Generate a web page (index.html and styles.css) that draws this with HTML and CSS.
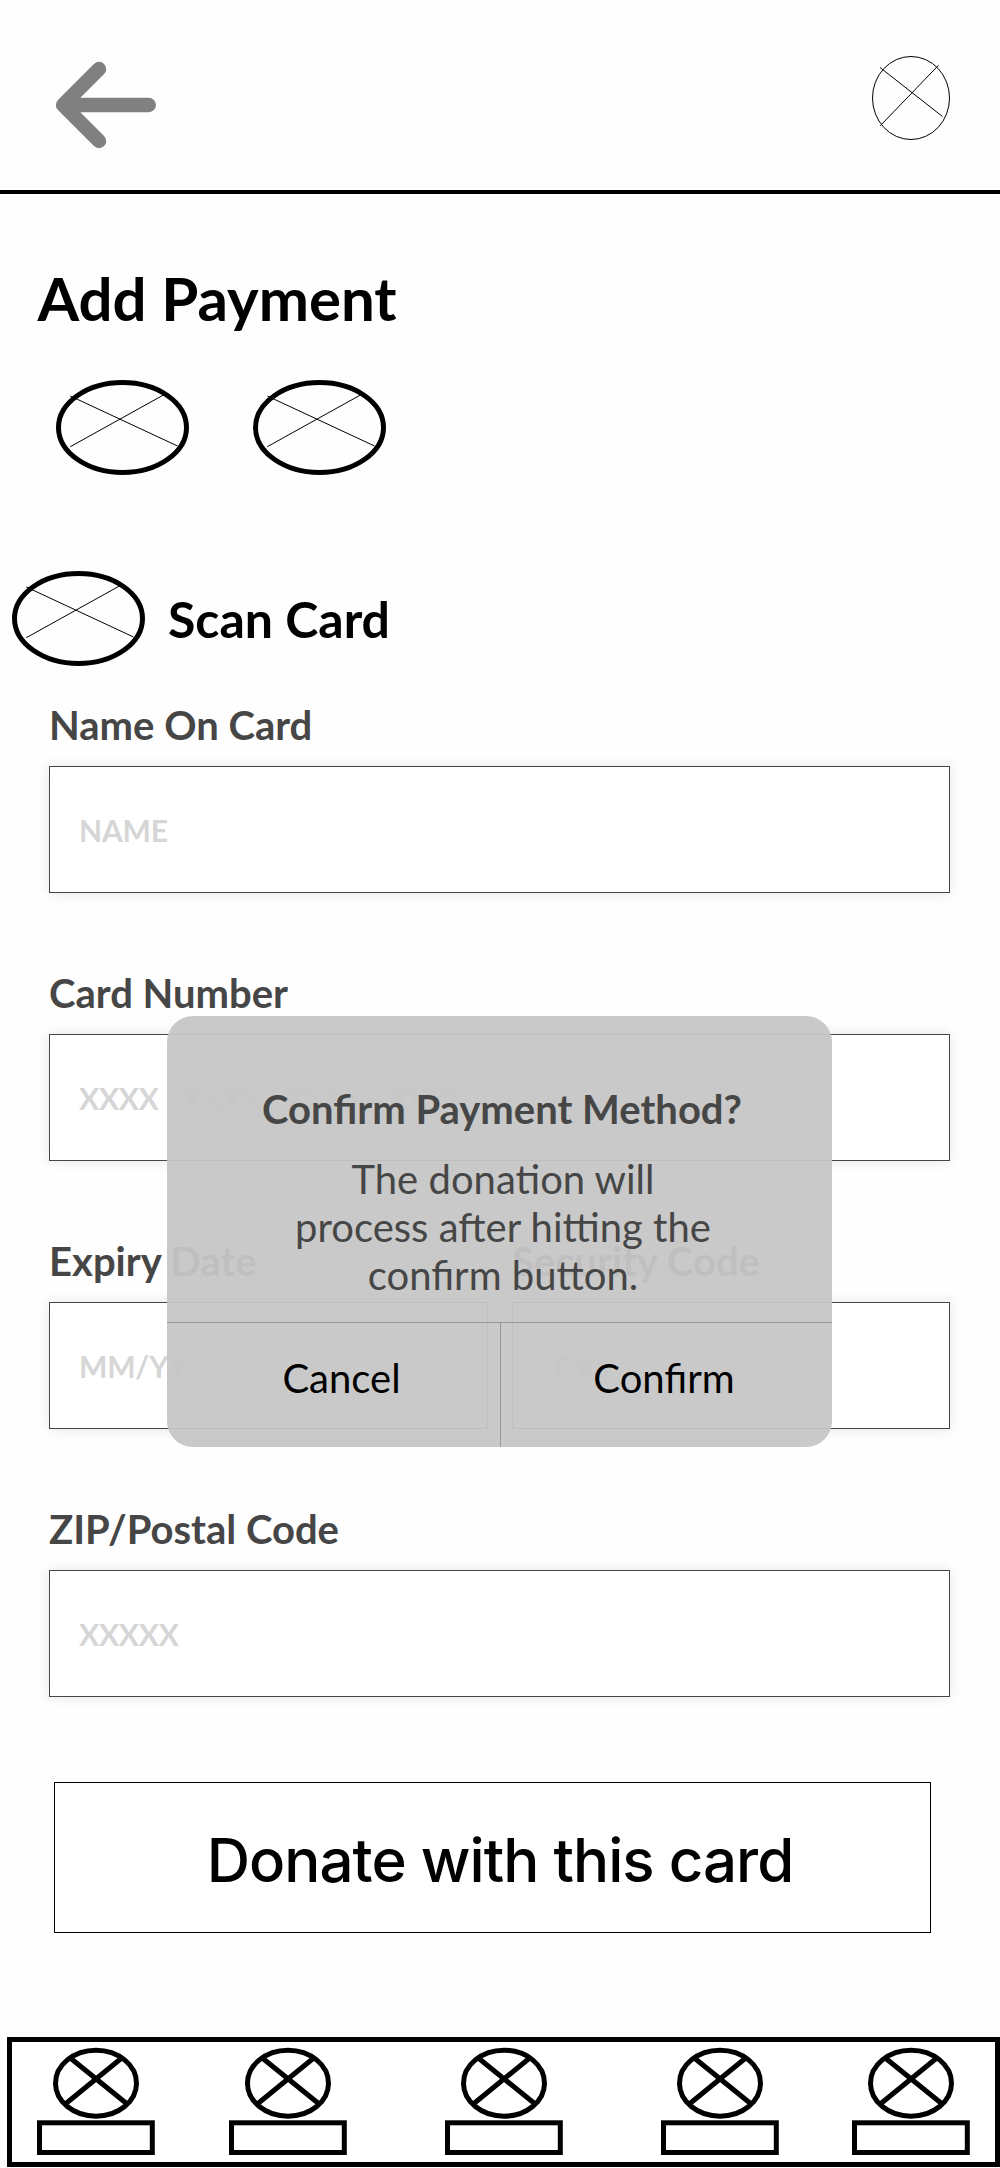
FILE: index.html
```html
<!DOCTYPE html>
<html lang="en">
<head>
<meta charset="utf-8">
<title>Add Payment</title>
<link rel="stylesheet" href="styles.css">
</head>
<body>
<svg class="defs" aria-hidden="true">
  <symbol id="method" viewBox="0 0 134 96">
    <ellipse cx="66.5" cy="47.5" rx="64" ry="45" fill="none" stroke="#000" stroke-width="5"/>
    <path d="M14.3 16 121.5 66M14.3 66.7 108.3 14.5" stroke="#000" stroke-width="1" fill="none"/>
  </symbol>
  <symbol id="tab" viewBox="0 0 118 108">
    <ellipse cx="59" cy="36.2" rx="40.5" ry="33" fill="none" stroke="#000" stroke-width="5"/>
    <path d="M33.3 11 90.5 57.3M84.7 11 28 57.3" stroke="#000" stroke-width="5" fill="none"/>
    <rect x="2.5" y="75.8" width="112.8" height="29.7" fill="none" stroke="#000" stroke-width="5"/>
  </symbol>
</svg>

<header class="topbar">
  <svg class="back" width="102" height="88" viewBox="0 0 102 88" role="img" aria-label="Back">
    <path d="M44 8 8 44 44 80M9 44H93.8" fill="none" stroke="#808080" stroke-width="14.4" stroke-linecap="round" stroke-linejoin="round"/>
  </svg>
  <svg class="avatar" width="80" height="86" viewBox="0 0 80 86" role="img" aria-label="Profile">
    <ellipse cx="40" cy="43" rx="38.5" ry="41.5" fill="none" stroke="#000"/>
    <path d="M9 12.5 71.5 61.5M9.3 70.7 67.5 10.3" fill="none" stroke="#000"/>
  </svg>
</header>

<main class="page">
  <h1 class="title">Add Payment</h1>
  <div class="methods">
    <svg class="method"><use href="#method"/></svg>
    <svg class="method"><use href="#method"/></svg>
  </div>
  <div class="scan">
    <svg class="method"><use href="#method"/></svg>
    <h2 class="scan-label">Scan Card</h2>
  </div>

  <form class="form">
    <div class="field">
      <div class="label">Name On Card</div>
      <div class="input">NAME</div>
    </div>
    <div class="field">
      <div class="label">Card Number</div>
      <div class="input">XXXX   XXXX   XXXX   XXXX</div>
    </div>
    <div class="row">
      <div class="field">
        <div class="label">Expiry Date</div>
        <div class="input">MM/YY</div>
      </div>
      <div class="field">
        <div class="label">Security Code</div>
        <div class="input input-cvv">CVV</div>
      </div>
    </div>
    <div class="field">
      <div class="label">ZIP/Postal Code</div>
      <div class="input">XXXXX</div>
    </div>
  </form>

  <div class="donate">Donate with this card</div>
</main>

<nav class="tabs">
  <svg class="tab"><use href="#tab"/></svg>
  <svg class="tab"><use href="#tab"/></svg>
  <svg class="tab"><use href="#tab"/></svg>
  <svg class="tab"><use href="#tab"/></svg>
  <svg class="tab"><use href="#tab"/></svg>
</nav>

<div class="dialog" role="dialog">
  <h3 class="dialog-title">Confirm Payment Method?</h3>
  <p class="dialog-text">The donation will<br>process after hitting the<br>confirm button.</p>
  <div class="actions">
    <div class="action action-cancel">Cancel</div>
    <div class="action action-confirm">Confirm</div>
  </div>
</div>
</body>
</html>
```
FILE: styles.css
```css
* {
  box-sizing: border-box;
}

body {
  position: relative;
  display: flex;
  flex-direction: column;
  width: 1000px;
  height: 2168px;
  margin: 0;
  overflow: hidden;
  background: #fefefe;
  color: #000;
  font-family: Lato, sans-serif;
}

h1, h2, h3, p {
  margin: 0;
}

svg {
  display: block;
  flex: none;
}

.defs {
  position: absolute;
  width: 0;
  height: 0;
}

.topbar {
  display: flex;
  flex: none;
  justify-content: space-between;
  align-items: flex-start;
  height: 194px;
  padding: 55px 49px 0 55px;
  border-bottom: 4px solid #000;
}

.back {
  margin-top: 6px;
}

.page {
  flex: none;
  height: 1843px;
  padding-top: 68px;
}

.title {
  padding-left: 37.5px;
  font-size: 60px;
  line-height: 72px;
}

.method {
  width: 134px;
  height: 96px;
}

.methods {
  display: flex;
  gap: 63px;
  margin-top: 46px;
  padding-left: 56px;
}

.scan {
  display: flex;
  align-items: center;
  gap: 22px;
  margin-top: 95px;
  padding-left: 12px;
}

.scan-label {
  font-size: 50px;
  line-height: 60px;
}

.form {
  display: flex;
  flex-direction: column;
  gap: 75px;
  margin-top: 33px;
  padding: 0 50px 0 49px;
}

.row {
  display: flex;
  gap: 24px;
}

.field {
  flex: 1;
}

.row .field:first-child {
  flex: none;
  width: 439px;
}

.label {
  height: 66px;
  color: #464646;
  font-size: 40px;
  font-weight: 700;
  line-height: 50px;
  white-space: nowrap;
}

.input {
  display: flex;
  align-items: center;
  height: 127px;
  padding: 1px 0 0 29px;
  border: 1px solid #464646;
  background: #fff;
  box-shadow: 0 0 12px rgba(0, 0, 0, 0.1);
  color: #d6d6d6;
  font-size: 30px;
  font-weight: 700;
  letter-spacing: -0.2px;
  white-space: pre;
  word-spacing: 0.7px;
}

.input-cvv {
  padding-left: 41px;
}

.donate {
  display: flex;
  align-items: center;
  justify-content: center;
  width: 877px;
  height: 151px;
  margin: 85px 0 0 54px;
  padding: 5px 0 0 15px;
  border: 1px solid #000;
  background: #fff;
  font-family: Inter, sans-serif;
  font-size: 60px;
  font-weight: 500;
  letter-spacing: -0.95px;
  white-space: nowrap;
}

.tabs {
  display: grid;
  flex: none;
  grid-template-columns: 192px 216px 216px 191px 118px;
  width: 993px;
  height: 130px;
  margin-left: 7px;
  padding: 5px 0 0 25px;
  border: 5px solid #000;
  background: #fff;
}

.tab {
  width: 118px;
  height: 108px;
}

.dialog {
  position: absolute;
  top: 1016px;
  left: 167px;
  display: flex;
  flex-direction: column;
  width: 665px;
  height: 431px;
  padding-top: 68.5px;
  border-radius: 26px;
  background: rgba(198, 198, 198, 0.95);
  color: #464646;
  font-size: 40px;
  line-height: 48px;
  text-align: center;
}

.dialog-title {
  padding-left: 5px;
  font-size: 40px;
}

.dialog-text {
  margin-top: 22px;
  padding-left: 7px;
}

.actions {
  display: flex;
  height: 125px;
  margin-top: auto;
  border-top: 1px solid #979797;
  color: #000;
}

.action {
  flex: 1;
  padding-top: 31px;
}

.action-cancel {
  flex: none;
  width: 334px;
  padding-left: 16px;
  border-right: 1px solid #979797;
}

.action-confirm {
  padding-right: 5px;
}
```
